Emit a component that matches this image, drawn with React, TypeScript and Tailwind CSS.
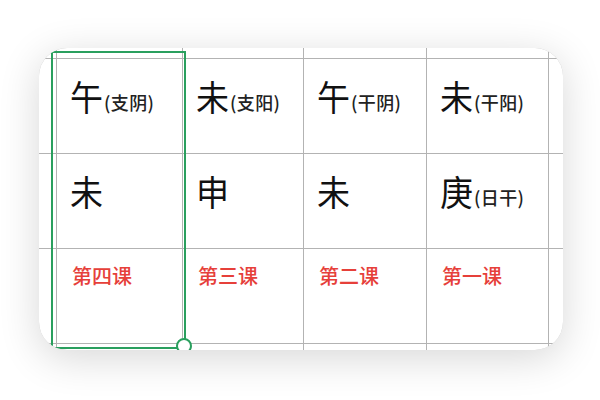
const font = { fontFamily: '"Noto Sans CJK SC", "Noto Sans", sans-serif' };

type Cell = { big?: string; small?: string; red?: string };

const row1: Cell[] = [
  { big: '午', small: '(支阴)' },
  { big: '未', small: '(支阳)' },
  { big: '午', small: '(干阴)' },
  { big: '未', small: '(干阳)' },
];
const row2: Cell[] = [{ big: '未' }, { big: '申' }, { big: '未' }, { big: '庚', small: '(日干)' }];
const row3: Cell[] = [{ red: '第四课' }, { red: '第三课' }, { red: '第二课' }, { red: '第一课' }];

function TextCell({ cell }: { cell: Cell }) {
  if (cell.red) {
    return (
      <div className="bg-white pl-[15px] pt-[13px]">
        <span className="text-[20px] leading-[28px] font-medium text-[#e6403a]">{cell.red}</span>
      </div>
    );
  }
  return (
    <div className="bg-white pl-[13px] pt-[15px]">
      <div className="flex items-baseline">
        <span className="text-[33px] leading-[44px] text-[#111] scale-y-[1.06]">{cell.big}</span>
        {cell.small && (
          <span className="text-[18px] text-[#222] font-medium tracking-[0.4px] ml-[1px]">{cell.small}</span>
        )}
      </div>
    </div>
  );
}

function Row({ cells }: { cells: Cell[] }) {
  return (
    <>
      <div className="bg-white" />
      {cells.map((c, i) => (
        <TextCell key={i} cell={c} />
      ))}
      <div className="bg-white" />
    </>
  );
}

export default function App() {
  return (
    <div className="w-[600px] h-[400px] bg-white pt-[48px] pl-[39px]" style={font}>
      <div className="relative w-[524px] h-[302px] rounded-[28px] overflow-hidden bg-white shadow-[0_8px_40px_rgba(0,0,0,0.16)]">
        <div className="grid h-full gap-px bg-[#b3b3b3] grid-cols-[17px_125px_120px_122px_121px_1fr] grid-rows-[10px_94px_94px_94px_1fr]">
          {Array.from({ length: 6 }).map((_, i) => (
            <div key={i} className="bg-white" />
          ))}
          <Row cells={row1} />
          <Row cells={row2} />
          <Row cells={row3} />
          {Array.from({ length: 6 }).map((_, i) => (
            <div key={'b' + i} className="bg-white" />
          ))}
        </div>
        <div className="absolute left-[12px] top-[3px] w-[135px] h-[298px] border-2 border-[#2a9f5e]" />
        <div className="absolute left-[137px] top-[290px] w-[16px] h-[16px] rounded-full bg-white border-2 border-[#2a9f5e]" />
      </div>
    </div>
  );
}
